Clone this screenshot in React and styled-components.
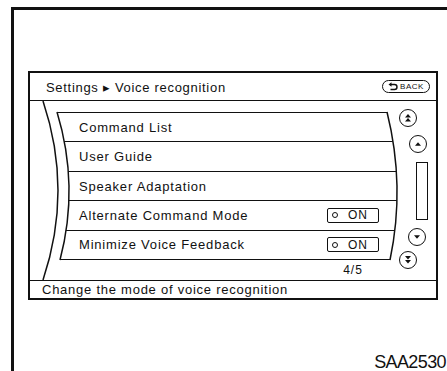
import React from "react";
import styled, { createGlobalStyle } from "styled-components";

const ink = "#111";

const GlobalStyle = createGlobalStyle`
  html, body {
    margin: 0;
    padding: 0;
    background: #fff;
  }
  body {
    width: 447px;
    height: 371px;
    overflow: hidden;
    font-family: "Liberation Sans", Arial, sans-serif;
    color: ${ink};
  }
`;

const ROWS = [
  { label: "Command List" },
  { label: "User Guide" },
  { label: "Speaker Adaptation" },
  { label: "Alternate Command Mode", toggle: "ON" },
  { label: "Minimize Voice Feedback", toggle: "ON" },
];

const Arrow = ({ dir, double }) => {
  const up = dir === "up";
  const tri = y => up
    ? `M5 ${y} L8 ${y + 3.5} L2 ${y + 3.5} Z`
    : `M2 ${y} L8 ${y} L5 ${y + 3.5} Z`;
  return (<svg width="10" height="10" viewBox="0 0 10 10">
    {double
      ? <><path d={tri(1)} fill={ink} /><path d={tri(5)} fill={ink} /></>
      : <path d={tri(3.2)} fill={ink} />}
  </svg>);
};

const BackIcon = () => (
  <svg width="10" height="9" viewBox="0 0 10 9">
    <path d="M3 2.5 H6.5 Q9 2.5 9 5 Q9 7.5 6.5 7.5 H2.5" fill="none" stroke={ink} strokeWidth="1.4" />
    <path d="M0.5 2.5 L3.5 0.3 L3.5 4.7 Z" fill={ink} />
  </svg>
);

const App = () => (
  <>
    <GlobalStyle />
    <Page>
      <Screen>
        <Header>
          <Title>Settings ▸ Voice recognition</Title>
          <BackButton>
            <BackIcon />
            <span>BACK</span>
          </BackButton>
        </Header>
        <Body>
          <Curves viewBox="0 0 406 179">
            <path d="M13 0 Q43 89.5 13 179" />
            <path d="M27 11 Q49.5 85 30 159" />
            <path d="M357 11 Q375.5 85 360 159" />
          </Curves>
          <ListColumn>
            <List>
              {ROWS.map(row => (
                <Row key={row.label}>
                  <span>{row.label}</span>
                  {row.toggle ? (
                    <Toggle>
                      <Lamp />
                      <span>{row.toggle}</span>
                    </Toggle>
                  ) : null}
                </Row>
              ))}
            </List>
            <Pager>
              <PageCount>4/5</PageCount>
            </Pager>
          </ListColumn>
          <Controls>
            <RoundButton $x={0}><Arrow dir="up" double /></RoundButton>
            <RoundButton $x={10}><Arrow dir="up" /></RoundButton>
            <ScrollTrack $x={17} />
            <RoundButton $x={9}><Arrow dir="down" /></RoundButton>
            <RoundButton $x={0} $mt={-3}><Arrow dir="down" double /></RoundButton>
          </Controls>
        </Body>
        <Status>Change the mode of voice recognition</Status>
      </Screen>
      <Caption>SAA2530</Caption>
    </Page>
  </>
);

const Page = styled.div`
  box-sizing: border-box;
  height: 364px;
  margin: 7px 0 0 11px;
  border-top: 3px solid ${ink};
  border-left: 3px solid ${ink};
  display: flex;
  flex-direction: column;
`;
const Screen = styled.div`
  box-sizing: border-box;
  width: 410px;
  height: 229px;
  margin: 61px 0 0 14px;
  border: 2px solid ${ink};
  display: flex;
  flex-direction: column;
`;
const Header = styled.div`
  box-sizing: border-box;
  height: 28px;
  padding: 2px 6px 0 16px;
  border-bottom: 1px solid ${ink};
  display: flex;
  align-items: center;
  justify-content: space-between;
`;
const Title = styled.div`
  font-size: 13px;
  letter-spacing: 0.7px;
`;
const BackButton = styled.div`
  box-sizing: border-box;
  width: 48px;
  height: 13px;
  margin-top: -2px;
  border: 1.5px solid ${ink};
  border-radius: 7px;
  display: flex;
  align-items: center;
  justify-content: center;
  gap: 2px;
  font-size: 8px;
  letter-spacing: 0.5px;
`;
const Body = styled.div`
  flex: 1;
  position: relative;
  display: flex;
  align-items: flex-start;
`;
const Curves = styled.svg`
  position: absolute;
  inset: 0;
  width: 100%;
  height: 100%;
  pointer-events: none;

  path {
    fill: none;
    stroke: ${ink};
    stroke-width: 1.5;
  }
`;
const ListColumn = styled.div`
  width: 342px;
  margin-left: 27px;
  padding-top: 11px;
  display: flex;
  flex-direction: column;
`;
const List = styled.div`
  box-sizing: border-box;
  height: 148px;
  border-top: 1px solid ${ink};
  clip-path: path("M0 0 L330 0 Q348.5 74 333 148 L3 148 Q22.5 74 0 0 Z");
  display: flex;
  flex-direction: column;
`;
const Row = styled.div`
  flex: 1;
  padding: 0 20px 0 22px;
  border-bottom: 1px solid ${ink};
  display: flex;
  align-items: center;
  justify-content: space-between;
  font-size: 13px;
  letter-spacing: 0.8px;
`;
const Toggle = styled.div`
  box-sizing: border-box;
  width: 52px;
  height: 15px;
  padding-left: 4px;
  border: 1.5px solid ${ink};
  border-radius: 2px;
  display: flex;
  align-items: center;
  gap: 10px;
  font-size: 12px;
  letter-spacing: 1px;
`;
const Lamp = styled.span`
  box-sizing: border-box;
  width: 6px;
  height: 6px;
  border: 1.5px solid ${ink};
  border-radius: 50%;
`;
const Pager = styled.div`
  height: 20px;
  padding-right: 20px;
  display: flex;
  justify-content: flex-end;
  align-items: center;
`;
const PageCount = styled.div`
  width: 52px;
  text-align: center;
  font-size: 12px;
  letter-spacing: 1px;
`;
const Controls = styled.div`
  padding-top: 8px;
  display: flex;
  flex-direction: column;
  gap: 8px;
`;
const RoundButton = styled.div`
  box-sizing: border-box;
  width: 18px;
  height: 18px;
  margin-left: ${props => props.$x}px;
  margin-top: ${props => props.$mt || 0}px;
  border: 1.5px solid ${ink};
  border-radius: 50%;
  display: grid;
  place-items: center;
`;
const ScrollTrack = styled.div`
  box-sizing: border-box;
  width: 12px;
  height: 58px;
  margin-left: ${props => props.$x}px;
  margin-top: 1px;
  border: 1.5px solid ${ink};
`;
const Status = styled.div`
  box-sizing: border-box;
  height: 18px;
  padding-left: 12px;
  border-top: 1px solid ${ink};
  font-size: 13px;
  line-height: 17px;
  letter-spacing: 0.75px;
`;
const Caption = styled.div`
  margin-top: auto;
  align-self: flex-end;
  font-size: 18px;
  line-height: 18px;
  letter-spacing: -0.6px;
  padding-right: 1px;
`;

export default App;
